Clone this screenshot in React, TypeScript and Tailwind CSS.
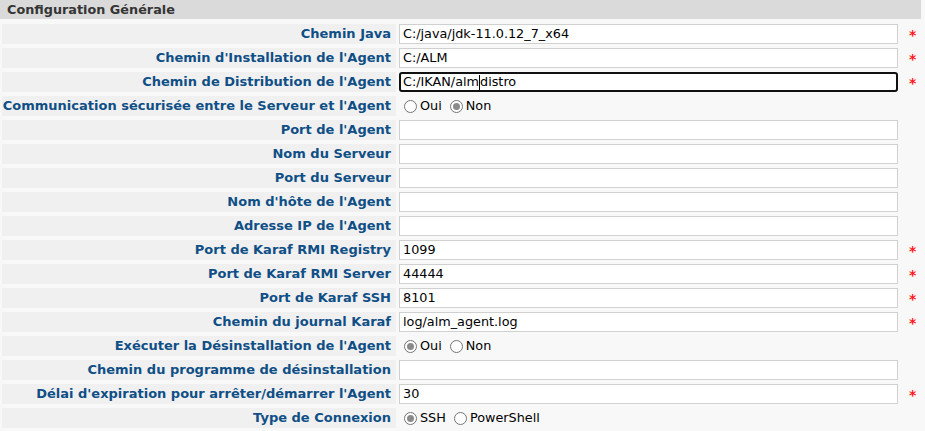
import React from "react";

type Row =
  | { label: string; kind: "text"; value: string; required?: boolean; focused?: boolean }
  | { label: string; kind: "radio"; options: string[]; selected: number };

const rows: Row[] = [
  { label: "Chemin Java", kind: "text", value: "C:/java/jdk-11.0.12_7_x64", required: true },
  { label: "Chemin d'Installation de l'Agent", kind: "text", value: "C:/ALM", required: true },
  { label: "Chemin de Distribution de l'Agent", kind: "text", value: "C:/IKAN/almdistro", required: true, focused: true },
  { label: "Communication sécurisée entre le Serveur et l'Agent", kind: "radio", options: ["Oui", "Non"], selected: 1 },
  { label: "Port de l'Agent", kind: "text", value: "" },
  { label: "Nom du Serveur", kind: "text", value: "" },
  { label: "Port du Serveur", kind: "text", value: "" },
  { label: "Nom d'hôte de l'Agent", kind: "text", value: "" },
  { label: "Adresse IP de l'Agent", kind: "text", value: "" },
  { label: "Port de Karaf RMI Registry", kind: "text", value: "1099", required: true },
  { label: "Port de Karaf RMI Server", kind: "text", value: "44444", required: true },
  { label: "Port de Karaf SSH", kind: "text", value: "8101", required: true },
  { label: "Chemin du journal Karaf", kind: "text", value: "log/alm_agent.log", required: true },
  { label: "Exécuter la Désinstallation de l'Agent", kind: "radio", options: ["Oui", "Non"], selected: 0 },
  { label: "Chemin du programme de désinstallation", kind: "text", value: "" },
  { label: "Délai d'expiration pour arrêter/démarrer l'Agent", kind: "text", value: "30", required: true },
  { label: "Type de Connexion", kind: "radio", options: ["SSH", "PowerShell"], selected: 0 },
];

function Radio({ checked }: { checked: boolean }) {
  return (
    <span className="inline-flex items-center justify-center w-[13px] h-[13px] rounded-full border border-[#767676] bg-white">
      {checked && <span className="w-[7px] h-[7px] rounded-full bg-[#8a8a8a]" />}
    </span>
  );
}

export default function App() {
  return (
    <div className="w-[925px] h-[431px] bg-[#f8f8f8] overflow-hidden font-['DejaVu_Sans',Verdana,sans-serif]">
      {/* Section header */}
      <div className="w-[921px] h-[19px] bg-[#dadada] pl-[7px] text-[12.8px] leading-[19px] font-bold text-[#353535]">
        Configuration Générale
      </div>

      <div className="grid grid-cols-[394px_499px_1fr] gap-x-[3px] gap-y-[4px] pl-[2px] pt-[5px]">
        {rows.map((row) => (
          <React.Fragment key={row.label}>
            <div className="h-[20px] bg-[#f0f0f0] pr-[5px] text-right text-[13px] leading-[20px] font-bold text-[#0f4f86] whitespace-nowrap">
              {row.label}
            </div>
            {row.kind === "text" ? (
              <div
                className={
                  row.focused
                    ? "h-[20px] bg-white border-2 border-[#101010] rounded-[3px] pl-[2px] text-[12.8px] text-black flex items-center"
                    : "h-[20px] bg-white border border-[#d0d0d0] pl-[3px] text-[12.8px] text-black flex items-center"
                }
              >
                {row.focused ? (
                  <>
                    <span>C:/IKAN/alm</span>
                    <span className="w-px h-[15px] bg-black" />
                    <span>distro</span>
                  </>
                ) : (
                  row.value
                )}
              </div>
            ) : (
              <div className="h-[20px] flex items-center pl-[5px] text-[12.8px] text-black">
                {row.options.map((opt, i) => (
                  <label key={opt} className="flex items-center gap-[3px] mr-[8px]">
                    <Radio checked={i === row.selected} />
                    <span>{opt}</span>
                  </label>
                ))}
              </div>
            )}
            <div className="h-[20px] pl-[8px] text-[14px] leading-[22px] font-bold text-[#ff1a1a]">
              {row.kind === "text" && row.required ? "*" : ""}
            </div>
          </React.Fragment>
        ))}
      </div>
    </div>
  );
}
